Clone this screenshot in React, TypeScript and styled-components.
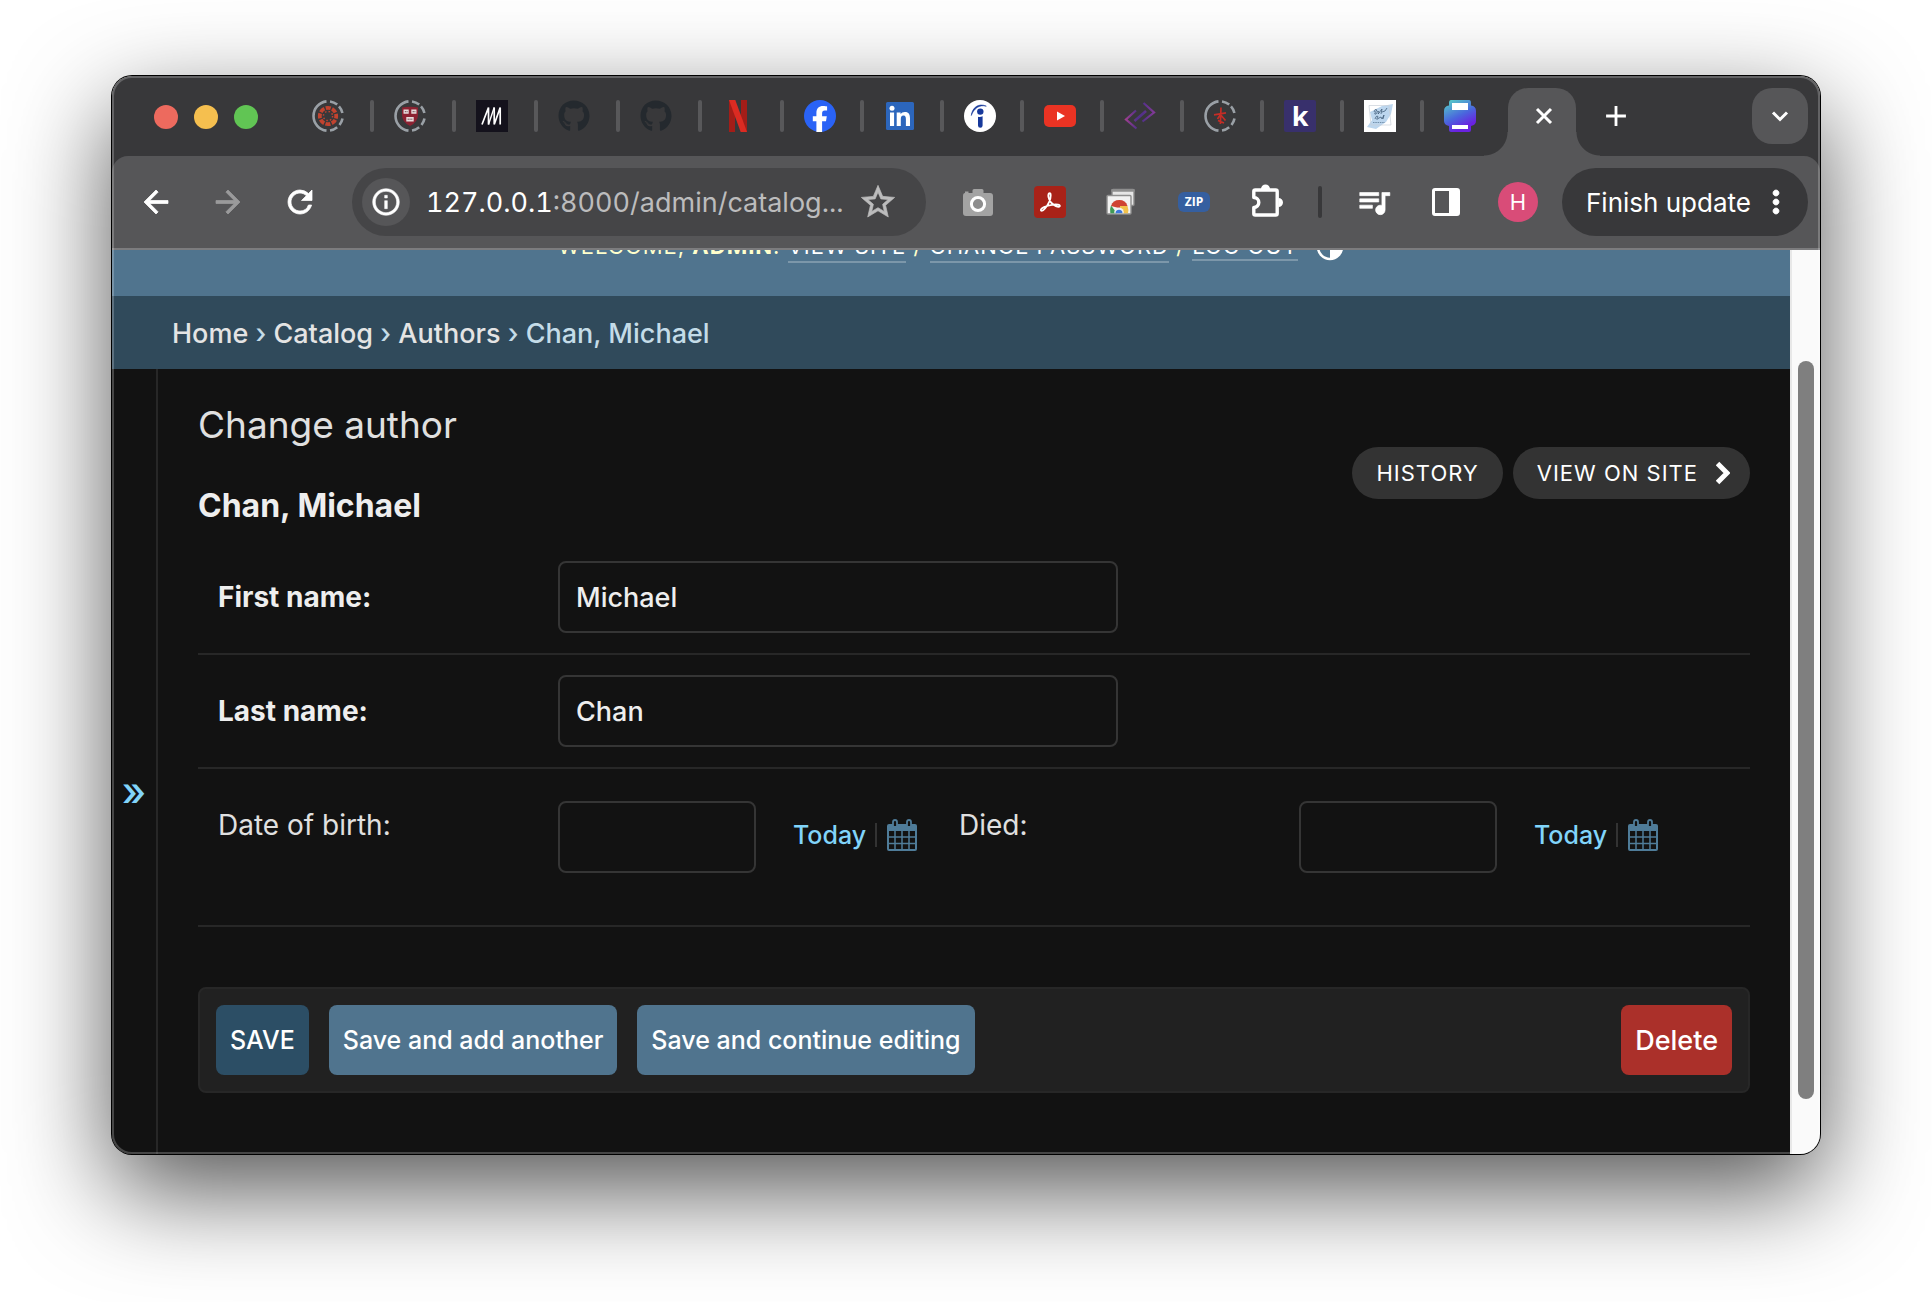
import React, { useState } from "react";
import styled, { createGlobalStyle } from "styled-components";
import { FaGithub } from "react-icons/fa";
import {
  MdAdd,
  MdArrowBack,
  MdArrowForward,
  MdInfoOutline,
  MdMoreVert,
  MdQueueMusic,
  MdRefresh,
  MdStarOutline,
} from "react-icons/md";

const Global = createGlobalStyle`
  *, *::before, *::after { box-sizing: border-box; }
  body {
    margin: 0;
    background: #ffffff;
    font-family: Inter, Roboto, "Liberation Sans", sans-serif;
    font-size: 28px;
    color: #eeeeee;
  }
  button, input { font: inherit; color: inherit; }
  button { border: 0; background: none; padding: 0; cursor: pointer; }
  a { color: inherit; text-decoration: none; }
  svg { display: block; flex: none; }
  svg path[fill="none"][d^="M0 0"] { stroke: none; }
`;

/* ---------- window ---------- */

const Desktop = styled.div`
  display: flex;
  min-height: 100vh;
  padding: 76px 112px 148px;
  overflow: hidden;
`;

const Window = styled.div`
  position: relative;
  flex: 1;
  min-width: 0;
  display: flex;
  flex-direction: column;
  border-radius: 20px;
  overflow: hidden;
  background: #38383a;
`;

const WindowShadow = styled.div`
  flex: 1;
  min-width: 0;
  display: flex;
  border-radius: 20px;
  box-shadow: 0 0 0 1px #000000, 0 36px 100px rgba(0, 0, 0, 0.68);
`;

const WindowRim = styled.div`
  position: absolute;
  inset: 0;
  border-radius: 20px;
  box-shadow: inset 0 0 0 2px rgba(255, 255, 255, 0.22);
  pointer-events: none;
`;

/* ---------- tab strip ---------- */

const TabStrip = styled.div`
  display: flex;
  align-items: flex-end;
  height: 80px;
  padding-right: 12px;
`;

const Lights = styled.div`
  display: flex;
  gap: 16px;
  width: 180px;
  height: 80px;
  padding: 2px 0 0 42px;
  align-items: center;
`;

const Light = styled.button<{ $color: string }>`
  width: 24px;
  height: 24px;
  border-radius: 50%;
  background: ${(p) => p.$color};
`;

const Tab = styled.button<{ $wide?: boolean; $last?: boolean }>`
  display: flex;
  align-items: center;
  justify-content: space-between;
  width: ${(p) => (p.$wide ? 82 : 80)}px;
  height: 80px;
  padding-left: 20px;

  &::after {
    content: "";
    width: 4px;
    height: 32px;
    border-radius: 2px;
    background: ${(p) => (p.$last ? "transparent" : "#58585a")};
  }
`;

const Favicon = styled.svg`
  width: 32px;
  height: 32px;
`;

const ActiveTab = styled.div`
  position: relative;
  display: flex;
  align-items: center;
  justify-content: center;
  width: 68px;
  height: 68px;
  padding: 0 0 12px 4px;
  margin-left: 4px;
  border-radius: 20px 20px 0 0;
  background: #565658;

  &::before,
  &::after {
    content: "";
    position: absolute;
    bottom: 0;
    width: 24px;
    height: 24px;
  }
  &::before {
    right: 100%;
    background: radial-gradient(circle at 0 0, transparent 23px, #565658 24px);
  }
  &::after {
    left: 100%;
    background: radial-gradient(circle at 100% 0, transparent 23px, #565658 24px);
  }
`;

const NewTab = styled.button`
  display: flex;
  align-items: center;
  justify-content: center;
  width: 80px;
  height: 80px;
`;

const TabSearch = styled.button`
  display: flex;
  align-items: center;
  justify-content: center;
  width: 56px;
  height: 56px;
  margin: 0 0 12px auto;
  border-radius: 20px;
  background: #565658;
`;

/* ---------- toolbar ---------- */

const Toolbar = styled.div`
  display: flex;
  align-items: center;
  justify-content: space-between;
  gap: 16px;
  height: 94px;
  padding: 0 12px 0 8px;
  border-bottom: 2px solid #7c7c7e;
  border-radius: 16px 16px 0 0;
  background: #565658;
`;

const ToolGroup = styled.div`
  display: flex;
  align-items: center;
`;

const ToolButton = styled.button<{ $dim?: boolean }>`
  display: flex;
  align-items: center;
  justify-content: center;
  width: 72px;
  height: 68px;
  color: ${(p) => (p.$dim ? "#9a9a9b" : "#ffffff")};
`;

const Omnibox = styled.div`
  display: flex;
  align-items: center;
  flex: 1;
  min-width: 0;
  height: 68px;
  padding: 0 28px 0 10px;
  border-radius: 34px;
  background: #454547;
`;

const SiteInfo = styled.button`
  display: flex;
  align-items: center;
  justify-content: center;
  width: 48px;
  height: 48px;
  margin-right: 16px;
  border-radius: 50%;
  background: #565658;
  color: #ffffff;
`;

const Url = styled.span`
  flex: 1;
  min-width: 0;
  overflow: hidden;
  white-space: nowrap;
  font-size: 27px;
  font-variant-numeric: tabular-nums;
  color: #bcbcbd;

  b {
    font-weight: 400;
    color: #ffffff;
  }
`;

const StarButton = styled.button`
  color: #bcbcbd;
`;

const ToolDivider = styled.span`
  width: 4px;
  height: 32px;
  margin: 0 16px;
  border-radius: 2px;
  background: #38383a;
`;

const Avatar = styled.button`
  display: flex;
  align-items: center;
  justify-content: center;
  width: 40px;
  height: 40px;
  margin: 0 24px 0 16px;
  border-radius: 50%;
  background: #d94c78;
  color: #ffffff;
  font-size: 22px;
`;

const UpdateButton = styled.button`
  display: flex;
  align-items: center;
  justify-content: space-between;
  width: 246px;
  height: 68px;
  padding: 0 14px 0 24px;
  border-radius: 34px;
  background: #38383a;
  color: #ffffff;
  font-size: 26px;
  white-space: nowrap;
`;

/* ---------- page ---------- */

const Viewport = styled.div`
  flex: 1;
  display: flex;
  background: #121212;
`;

const Page = styled.div`
  flex: 1;
  min-width: 0;
  display: flex;
  flex-direction: column;
`;

const ScrollTrack = styled.div`
  width: 30px;
  padding: 111px 6px 55px;
  border-left: 2px solid #e8e8e8;
  background: #fafafa;
  display: flex;
`;

const ScrollThumb = styled.div`
  flex: 1;
  border-radius: 8px;
  background: #7f7f7f;
`;

const UserTools = styled.header`
  display: flex;
  align-items: flex-end;
  justify-content: center;
  height: 46px;
  padding-bottom: 35px;
  overflow: hidden;
  background: #50748e;
  color: #ffffcc;
  font-size: 22px;
  line-height: 30px;
  letter-spacing: 1px;
  text-transform: uppercase;
  white-space: nowrap;
`;

const ToolLink = styled.a<{ $low?: boolean }>`
  padding-bottom: ${(p) => (p.$low ? 2 : 0)}px;
  color: #ffffff;
  border-bottom: 2px solid rgba(255, 255, 255, 0.25);
`;

const ThemeButton = styled.button`
  margin-left: 18px;
`;

const Breadcrumbs = styled.nav`
  height: 73px;
  padding: 0 60px;
  background: #304a5b;
  color: #c4dce8;
  font-size: 27px;
  font-weight: 450;
  line-height: 75px;
  white-space: pre;

  a {
    color: #e4e4e4;
  }
`;

const Main = styled.div`
  flex: 1;
  display: flex;
`;

const NavToggle = styled.button`
  width: 46px;
  padding: 60px 0 0;
  border-right: 2px solid #272727;
  color: #81d4fa;
  font-size: 40px;
  font-weight: 500;
`;

const Content = styled.main`
  flex: 1;
  min-width: 0;
  padding: 32px 40px 60px;
`;

const Title = styled.h1`
  margin: 0;
  font-size: 37px;
  font-weight: 400;
  line-height: 48px;
  color: #e0e0e0;
`;

const SubHead = styled.div`
  display: flex;
  justify-content: space-between;
  align-items: flex-start;
  margin-bottom: 15px;
`;

const Subtitle = styled.h2`
  margin: 37px 0 0;
  font-size: 32px;
  font-weight: 700;
  line-height: 40px;
`;

const ObjectTools = styled.div`
  display: flex;
  gap: 10px;
  margin-top: -2px;
`;

const ObjectTool = styled.a<{ $arrow?: boolean }>`
  display: flex;
  align-items: center;
  gap: 18px;
  height: 52px;
  padding: 0 ${(p) => (p.$arrow ? 20 : 24)}px 0 24px;
  border-radius: 26px;
  background: #333333;
  color: #ffffff;
  font-size: 22px;
  letter-spacing: 1px;
  text-transform: uppercase;
  white-space: nowrap;
`;

const FormRow = styled.div<{ $dates?: boolean }>`
  display: flex;
  align-items: ${(p) => (p.$dates ? "flex-start" : "center")};
  padding: ${(p) => (p.$dates ? "32px 20px 52px" : "20px")};
  border-bottom: 2px solid #272727;
`;

const Field = styled.div`
  display: flex;
  align-items: flex-start;
  width: 741px;
`;

const Label = styled.label<{ $required?: boolean }>`
  width: 340px;
  line-height: 48px;
  font-weight: ${(p) => (p.$required ? 700 : 400)};
  color: ${(p) => (p.$required ? "#eeeeee" : "#e0e0e0")};
`;

const TextInput = styled.input<{ $short?: boolean }>`
  width: ${(p) => (p.$short ? 198 : 560)}px;
  height: 72px;
  padding: 0 16px;
  border: 2px solid #353535;
  border-radius: 8px;
  background: #121212;
  font-size: 27px;
  font-weight: 450;
  outline: none;
`;

const Shortcuts = styled.span`
  display: flex;
  align-items: center;
  height: 68px;
  margin-left: 37px;
  color: #81d4fa;
  font-size: 25px;
  font-weight: 450;
`;

const Bar = styled.span`
  width: 2px;
  height: 24px;
  margin: 0 9px;
  background: #333333;
`;

const SubmitRow = styled.div`
  display: flex;
  align-items: center;
  gap: 20px;
  margin-top: 60px;
  padding: 16px;
  border: 2px solid #272727;
  border-radius: 8px;
  background: #212121;
`;

const SubmitButton = styled.button<{ $tone: string; $end?: boolean }>`
  height: 70px;
  padding: 0 14px;
  margin-left: ${(p) => (p.$end ? "auto" : "0")};
  border-radius: 8px;
  background: ${(p) => p.$tone};
  color: #ffffff;
  font-size: ${(p) => (p.$end ? 27 : 25)}px;
  font-weight: 500;
  white-space: nowrap;
`;

/* ---------- drawings ---------- */

const DashedRing = () => (
  <g fill="none" stroke="#9aa0a6" strokeWidth="2.6">
    <path d="M14.5 1.4A14.7 14.7 0 0 0 14.5 30.6" />
    <path d="M18 1.5A14.7 14.7 0 0 1 25.2 4.6M27 6.4A14.7 14.7 0 0 1 30.4 13M30.5 18.5A14.7 14.7 0 0 1 27.5 25M25.2 27.3A14.7 14.7 0 0 1 18 30.5" />
  </g>
);

const CanvasIcon = () => (
  <Favicon viewBox="0 0 32 32">
    <DashedRing />
    <circle cx="16" cy="16" r="8.2" fill="none" stroke="#c2432f" strokeWidth="3.8" strokeDasharray="5 1.44" strokeDashoffset="2.5" />
    <circle cx="16" cy="16" r="4.6" fill="none" stroke="#c2432f" strokeWidth="1.5" strokeDasharray="1.5 2.11" />
  </Favicon>
);

const ShieldIcon = () => (
  <Favicon viewBox="0 0 32 32">
    <DashedRing />
    <path d="M8 7.5Q16 6 24 7.5V15Q24 22 16 26Q8 22 8 15Z" fill="#8c2232" />
    <path d="M9.5 9.5H14.7V13.8H9.5ZM17.3 9.5H22.5V13.8H17.3ZM12.3 17H19.7V21.4H12.3Z" fill="#e8dcdc" />
    <path d="M10.8 11.7H13.6M18.6 11.7H21.4M13.6 19.2H18.4" stroke="#6b4a50" strokeWidth="1" strokeDasharray="1.3 .5" />
  </Favicon>
);

const MIcon = () => (
  <Favicon viewBox="0 0 32 32">
    <rect width="32" height="32" fill="#14121c" />
    <path d="M6 24.5L12.5 7.5V24.5M18.2 24.5V7.5M24.2 24.5V7.5L18.2 24.5" fill="none" stroke="#fff" strokeWidth="1.7" />
    <path d="M12.5 24.5L18.2 7.5" stroke="#fff" strokeWidth="1.4" />
  </Favicon>
);

const NetflixIcon = () => (
  <Favicon viewBox="0 0 32 32">
    <path d="M7 0H13V32H7ZM19 0H25V32H19Z" fill="#a31d18" />
    <path d="M7 0H13.3L25 32H18.7Z" fill="#dc2b22" />
  </Favicon>
);

const FacebookIcon = () => (
  <Favicon viewBox="0 0 32 32">
    <circle cx="16" cy="16" r="16" fill="#2a63f6" />
    <path d="M12.4 32V21.2H8.8V16.3H12.4V13.2C12.4 8.2 14.8 6 19.2 6C20.8 6 22.3 6.2 23.1 6.5V10.6H20.8C18.8 10.6 18.1 11.6 18.1 13.6V16.3H22.8L22 21.2H18.1V32Z" fill="#fff" />
  </Favicon>
);

const LinkedinIcon = () => (
  <Favicon viewBox="0 0 32 32">
    <rect x="2" y="2" width="28" height="28" rx="1.5" fill="#2c66bc" />
    <circle cx="8" cy="8.2" r="2.5" fill="#fff" />
    <path d="M6 12.4H10.1V26H6ZM12.7 12.4H16.6V14.3C17.5 12.9 18.9 12 20.9 12C24.9 12 26 14.6 26 18.4V26H21.9V19.4C21.9 17.4 21.6 15.6 19.5 15.6C17.4 15.6 16.8 17.3 16.8 19.2V26H12.7Z" fill="#fff" />
  </Favicon>
);

const IndeedIcon = () => (
  <Favicon viewBox="0 0 32 32">
    <circle cx="16" cy="16" r="16" fill="#fff" />
    <circle cx="16.3" cy="11.6" r="3.2" fill="#17399b" />
    <path d="M14 16.7Q16.3 17.3 18.6 16.2V25.5Q18.6 27.8 16.3 27.8Q14 27.8 14 25.5Z" fill="#17399b" />
    <path d="M7.3 15.5C8 8 14.5 2.5 22.3 6.2C15.5 4.2 9.8 8.5 7.3 15.5Z" fill="#17399b" stroke="#17399b" strokeWidth=".6" />
  </Favicon>
);

const YoutubeIcon = () => (
  <Favicon viewBox="0 0 32 32">
    <rect y="5" width="32" height="22" rx="5" fill="#ea3323" />
    <path d="M13 11.5V20.5L21 16Z" fill="#fff" />
  </Favicon>
);

const CodeIcon = () => (
  <Favicon viewBox="0 0 32 32">
    <defs>
      <linearGradient id="code" x1="0" y1="0" x2="32" y2="0" gradientUnits="userSpaceOnUse">
        <stop offset="0" stopColor="#a8418f" />
        <stop offset="0.4" stopColor="#54308a" />
        <stop offset="0.6" stopColor="#54308a" />
        <stop offset="1" stopColor="#8a3b98" />
      </linearGradient>
    </defs>
    <path d="M12 10.5L2 19.5L12.5 28.5M19.5 3L30 12.5L18.5 21.5" fill="none" stroke="url(#code)" strokeWidth="2.2" />
    <path d="M10.5 21L22 11" fill="none" stroke="url(#code)" strokeWidth="2.6" />
  </Favicon>
);

const FigureIcon = () => (
  <Favicon viewBox="0 0 32 32">
    <DashedRing />
    <path d="M17 7.5L16.4 24M10 14.8L22 12.8M16.5 14.5L13.5 19M16.8 15L21.5 20.5M14 20.5L20 23" fill="none" stroke="#c52d26" strokeWidth="1.7" />
  </Favicon>
);

const PaintIcon = () => (
  <Favicon viewBox="0 0 32 32">
    <rect width="32" height="32" fill="#fff" />
    <path d="M6 12L18 6L29 4L27 14L22 22L12 29L3 27L8 20Z" fill="#bcd6ee" />
    <path d="M5 5.5H25L27 25H7Z" fill="none" stroke="#c9d0d8" strokeWidth=".7" />
    <path d="M10 12Q11 8 13 10Q9 15 12 14L14 11Q16 12 14 14L18 9L17 14M18 12L21 11L23 8M11 19Q13 14 14 17Q11 21 15 18L17 17L18 19L20 15L19 19" fill="none" stroke="#33506d" strokeWidth=".7" />
    <path d="M9 22.5H21" stroke="#5f7c98" strokeWidth=".8" strokeDasharray="1.5 .8" />
  </Favicon>
);

const PrinterIcon = () => (
  <Favicon viewBox="0 0 32 32">
    <defs>
      <linearGradient id="printer" x1="0.2" y1="0" x2="0.7" y2="1">
        <stop offset="0" stopColor="#55c8c8" />
        <stop offset="0.5" stopColor="#4a66dd" />
        <stop offset="0.85" stopColor="#6a22e0" />
      </linearGradient>
    </defs>
    <path d="M7 0H25Q27 0 27 3V5.5Q32 6 32 11V21Q32 25 27 26V30Q27 32 25 32H7Q5 32 5 30V26Q0 25 0 21V11Q0 6 5 5.5V3Q5 0 7 0Z" fill="url(#printer)" />
    <path d="M8 3H24V10H8ZM8 25H24V29H8Z" fill="#fff" />
  </Favicon>
);

const KIcon = styled.span`
  display: flex;
  align-items: center;
  justify-content: center;
  width: 32px;
  height: 32px;
  border-radius: 2px;
  background: #38306c;
  color: #ffffff;
  font: 700 27px/32px "Open Sans", sans-serif;
`;

const CameraIcon = () => (
  <Favicon viewBox="0 0 32 32">
    <path d="M3 7V5.5H6.5V7H10.5V4.5Q10.5 3 12 3H20Q21.5 3 21.5 4.5V7H28Q31 7 31 10V27Q31 30 28 30H4Q1 30 1 27V10Q1 7 3 7Z" fill="#a3a3a3" />
    <circle cx="16" cy="18" r="6.6" fill="#8e8e8e" stroke="#fff" strokeWidth="3" />
  </Favicon>
);

const AcrobatIcon = () => (
  <Favicon viewBox="0 0 32 32">
    <rect width="32" height="32" rx="4" fill="#a82218" />
    <path d="M14.8 7.5C17.5 5.5 17 12 15.2 15.8C13 20.5 9 26 7 24.5C5.5 22.5 13 19.5 18 18.8C22.5 18 26.5 18.6 25.8 20.3C24.5 22 19.5 19.6 17 16.4C14.8 13.4 13.8 9.5 14.8 7.5Z" fill="none" stroke="#fff" strokeWidth="1.8" />
  </Favicon>
);

const ScreensIcon = () => (
  <Favicon viewBox="0 0 32 32">
    <rect x="6" y="3.5" width="22" height="16" rx="1" fill="#e6e6e6" stroke="#8a8a8a" strokeWidth="1.4" />
    <path d="M5.3 4.5H28.7" stroke="#8f8f8f" strokeWidth="2.4" />
    <rect x="1" y="9.5" width="24" height="18.5" rx="1" fill="#f2f2f2" stroke="#8f8f8f" strokeWidth="1.4" />
    <path d="M5 20A8.7 8.7 0 0 1 21.5 20L13 22Z" fill="#cf4332" />
    <path d="M5 19.5L11 27.3H4.3Q3.5 23 5 19.5Z" fill="#3f9a55" />
    <path d="M14 20H21.5Q23 24 22 27.3H14Z" fill="#f2c14a" />
    <path d="M8.3 27.3A4.8 4.8 0 1 1 17.7 27.3Z" fill="#f2f2f2" />
    <path d="M9.5 27.3A3.5 3.5 0 1 1 16.5 27.3Z" fill="#3f78dc" />
  </Favicon>
);

const PuzzleIcon = () => (
  <svg width="36" height="36" viewBox="-2 0 36 36">
    <path
      d="M3.8 13.5V7.5Q3.8 6 5.3 6H25.7Q27.2 6 27.2 7.5V29.5Q27.2 31 25.7 31H5.3Q3.8 31 3.8 29.5V23.5A5 5 0 0 0 3.8 13.5Z"
      fill="none"
      stroke="#fff"
      strokeWidth="3.4"
      strokeLinejoin="round"
    />
    <path d="M11 5A4.5 4.5 0 0 1 20 5ZM28.5 14A4.5 4.5 0 0 1 28.5 23Z" fill="#fff" />
  </svg>
);

const ZipBadge = styled.span`
  display: flex;
  align-items: center;
  justify-content: center;
  width: 32px;
  height: 20px;
  border-radius: 6px;
  background: #355fa0;
  color: #ffffff;
  font: 700 12px/20px "Open Sans", sans-serif;
`;

const PanelIcon = () => (
  <svg width="32" height="32" viewBox="0 0 32 32">
    <rect x="3.5" y="3.5" width="25" height="25" rx="1.5" fill="none" stroke="#fff" strokeWidth="3" />
    <path d="M19 3H28V29H19Z" fill="#fff" />
  </svg>
);

const CloseIcon = () => (
  <svg width="20" height="20" viewBox="0 0 20 20">
    <path d="M3 3L17 17M17 3L3 17" fill="none" stroke="#fff" strokeWidth="3" />
  </svg>
);

const ChevronDown = () => (
  <svg width="20" height="20" viewBox="0 0 20 20">
    <path d="M3 6.5L10 13.5L17 6.5" fill="none" stroke="#fff" strokeWidth="3" />
  </svg>
);

const ChevronRight = () => (
  <svg width="14" height="24" viewBox="1 0 14 24">
    <path d="M2.5 2.5L12 12L2.5 21.5" fill="none" stroke="#fff" strokeWidth="5" />
  </svg>
);

const ThemeIcon = () => (
  <svg width="28" height="28" viewBox="0 0 28 28">
    <circle cx="14" cy="14" r="12" fill="none" stroke="#fff" strokeWidth="2.5" />
    <path d="M14 2A12 12 0 0 1 14 26Z" fill="#fff" />
  </svg>
);

const CalendarIcon = () => (
  <svg width="32" height="32" viewBox="0 0 32 32">
    <g fill="none" stroke="#4f7c99" strokeWidth="2">
      <path d="M2 11V30Q2 31 3 31H29Q30 31 30 30V11" />
      <path d="M9 12V31M16 12V31M23 12V31M2 18H30M2 24.5H30" strokeWidth="1.5" />
    </g>
    <path d="M3 5H29Q31 5 31 7V12H1V7Q1 5 3 5Z" fill="#4f7c99" />
    <path d="M7 8V3Q7 1 9 1Q11 1 11 3V8ZM21 8V3Q21 1 23 1Q25 1 25 3V8Z" fill="#121212" stroke="#4f7c99" strokeWidth="1.8" />
  </svg>
);

const tabs: { name: string; icon: React.ReactNode }[] = [
  { name: "Canvas", icon: <CanvasIcon /> },
  { name: "Harvard", icon: <ShieldIcon /> },
  { name: "M", icon: <MIcon /> },
  { name: "GitHub", icon: <FaGithub size={32} color="#24292e" /> },
  { name: "GitHub", icon: <FaGithub size={32} color="#24292e" /> },
  { name: "Netflix", icon: <NetflixIcon /> },
  { name: "Facebook", icon: <FacebookIcon /> },
  { name: "LinkedIn", icon: <LinkedinIcon /> },
  { name: "Indeed", icon: <IndeedIcon /> },
  { name: "YouTube", icon: <YoutubeIcon /> },
  { name: "Code", icon: <CodeIcon /> },
  { name: "Figure", icon: <FigureIcon /> },
  { name: "K", icon: <KIcon>k</KIcon> },
  { name: "Paint", icon: <PaintIcon /> },
  { name: "Printer", icon: <PrinterIcon /> },
];

function DateField({ id, label }: { id: string; label: string }) {
  const [value, setValue] = useState("");
  return (
    <Field>
      <Label htmlFor={id}>{label}</Label>
      <TextInput id={id} $short value={value} onChange={(e) => setValue(e.target.value)} />
      <Shortcuts>
        <a href="#today">Today</a>
        <Bar />
        <button type="button" aria-label="Choose a date">
          <CalendarIcon />
        </button>
      </Shortcuts>
    </Field>
  );
}

export default function App() {
  const [first, setFirst] = useState("Michael");
  const [last, setLast] = useState("Chan");

  return (
    <Desktop>
      <Global />
      <WindowShadow>
        <Window>
          <TabStrip>
            <Lights>
              <Light $color="#ed6a5e" aria-label="Close window" />
              <Light $color="#f5bf4f" aria-label="Minimise" />
              <Light $color="#61c554" aria-label="Zoom window" />
            </Lights>
            {tabs.map((tab, i) => (
              <Tab key={i} $wide={i < 6} $last={i === tabs.length - 1} aria-label={tab.name}>
                {tab.icon}
              </Tab>
            ))}
            <ActiveTab>
              <button aria-label="Close tab">
                <CloseIcon />
              </button>
            </ActiveTab>
            <NewTab aria-label="New tab">
              <MdAdd size={34} color="#fff" />
            </NewTab>
            <TabSearch aria-label="Search tabs">
              <ChevronDown />
            </TabSearch>
          </TabStrip>

          <Toolbar>
            <ToolGroup>
              <ToolButton aria-label="Back">
                <MdArrowBack size={36} strokeWidth={0.5} />
              </ToolButton>
              <ToolButton $dim aria-label="Forward">
                <MdArrowForward size={36} strokeWidth={0.5} />
              </ToolButton>
              <ToolButton aria-label="Reload">
                <MdRefresh size={36} strokeWidth={0.5} />
              </ToolButton>
            </ToolGroup>
            <Omnibox>
              <SiteInfo aria-label="Site information">
                <MdInfoOutline size={32} strokeWidth={0.4} />
              </SiteInfo>
              <Url>
                <b>127.0.0.1</b>:8000/admin/catalog...
              </Url>
              <StarButton aria-label="Bookmark this page">
                <MdStarOutline size={40} strokeWidth={0.4} />
              </StarButton>
            </Omnibox>
            <ToolGroup>
              <ToolButton aria-label="Capture">
                <CameraIcon />
              </ToolButton>
              <ToolButton aria-label="Acrobat">
                <AcrobatIcon />
              </ToolButton>
              <ToolButton aria-label="Screens">
                <ScreensIcon />
              </ToolButton>
              <ToolButton aria-label="Zip">
                <ZipBadge>ZIP</ZipBadge>
              </ToolButton>
              <ToolButton aria-label="Extensions">
                <PuzzleIcon />
              </ToolButton>
              <ToolDivider />
              <ToolButton aria-label="Media controls">
                <MdQueueMusic size={38} strokeWidth={0.4} />
              </ToolButton>
              <ToolButton aria-label="Side panel">
                <PanelIcon />
              </ToolButton>
              <Avatar aria-label="Profile">H</Avatar>
              <UpdateButton>
                Finish update
                <MdMoreVert size={36} strokeWidth={0.5} />
              </UpdateButton>
            </ToolGroup>
          </Toolbar>

          <Viewport>
            <Page>
              <UserTools>
                <span>
                  Welcome, <strong>admin</strong>.{" "}
                  <ToolLink $low href="#site">
                    View site
                  </ToolLink>{" "}
                  /{" "}
                  <ToolLink $low href="#password">
                    Change password
                  </ToolLink>{" "}
                  / <ToolLink href="#logout">Log out</ToolLink>
                </span>
                <ThemeButton aria-label="Toggle theme">
                  <ThemeIcon />
                </ThemeButton>
              </UserTools>
              <Breadcrumbs aria-label="Breadcrumbs">
                <a href="#home">Home</a> › <a href="#catalog">Catalog</a> › <a href="#authors">Authors</a> › Chan, Michael
              </Breadcrumbs>
              <Main>
                <NavToggle aria-label="Toggle navigation">»</NavToggle>
                <Content>
                  <Title>Change author</Title>
                  <SubHead>
                    <Subtitle>Chan, Michael</Subtitle>
                    <ObjectTools>
                      <ObjectTool href="#history">History</ObjectTool>
                      <ObjectTool $arrow href="#view">
                        View on site
                        <ChevronRight />
                      </ObjectTool>
                    </ObjectTools>
                  </SubHead>
                  <form onSubmit={(e) => e.preventDefault()}>
                    <FormRow>
                      <Label htmlFor="first" $required>
                        First name:
                      </Label>
                      <TextInput id="first" value={first} onChange={(e) => setFirst(e.target.value)} />
                    </FormRow>
                    <FormRow>
                      <Label htmlFor="last" $required>
                        Last name:
                      </Label>
                      <TextInput id="last" value={last} onChange={(e) => setLast(e.target.value)} />
                    </FormRow>
                    <FormRow $dates>
                      <DateField id="birth" label="Date of birth:" />
                      <DateField id="died" label="Died:" />
                    </FormRow>
                    <SubmitRow>
                      <SubmitButton $tone="#2c4e65">SAVE</SubmitButton>
                      <SubmitButton $tone="#50748e">Save and add another</SubmitButton>
                      <SubmitButton $tone="#50748e">Save and continue editing</SubmitButton>
                      <SubmitButton type="button" $tone="#ab302a" $end>
                        Delete
                      </SubmitButton>
                    </SubmitRow>
                  </form>
                </Content>
              </Main>
            </Page>
            <ScrollTrack>
              <ScrollThumb />
            </ScrollTrack>
          </Viewport>
          <WindowRim />
        </Window>
      </WindowShadow>
    </Desktop>
  );
}
